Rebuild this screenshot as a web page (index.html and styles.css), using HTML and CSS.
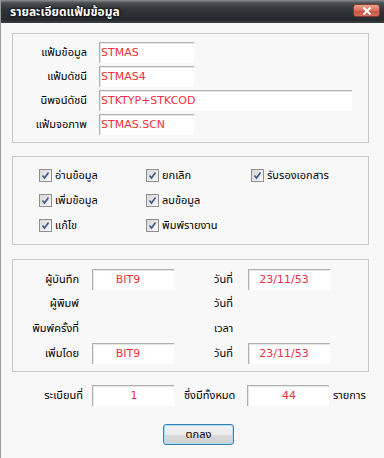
FILE: index.html
```html
<!DOCTYPE html>
<html>
<head>
	<meta charset="utf-8">
	<title>รายละเอียดแฟ้มข้อมูล</title>
	<link rel="stylesheet" href="styles.css">
</head>
<body>
	<div class="window">
		<div class="titlebar">
			<span class="title">รายละเอียดแฟ้มข้อมูล</span>
			<span class="close">
				<svg width="10" height="8" viewBox="0 0 10 8"><path d="M1.5 0.5 L8.5 7.5 M8.5 0.5 L1.5 7.5" stroke="#fff" stroke-width="2"/></svg>
			</span>
		</div>

		<div class="content">
			<div class="group files">
				<span class="label">แฟ้มข้อมูล</span><div class="field short">STMAS</div>
				<span class="label">แฟ้มดัชนี</span><div class="field short">STMAS4</div>
				<span class="label">นิพจน์ดัชนี</span><div class="field long">STKTYP+STKCOD</div>
				<span class="label">แฟ้มจอภาพ</span><div class="field short">STMAS.SCN</div>
			</div>

			<div class="group perms">
				<div class="check"><span class="box"></span>อ่านข้อมูล</div>
				<div class="check"><span class="box"></span>ยกเลิก</div>
				<div class="check"><span class="box"></span>รับรองเอกสาร</div>
				<div class="check"><span class="box"></span>เพิ่มข้อมูล</div>
				<div class="check"><span class="box"></span>ลบข้อมูล</div>
				<div></div>
				<div class="check"><span class="box"></span>แก้ไข</div>
				<div class="check"><span class="box"></span>พิมพ์รายงาน</div>
			</div>

			<div class="group audit">
				<span class="label">ผู้บันทึก</span><div class="field center">BIT9</div>
				<span class="label2">วันที่</span><div class="field center">23/11/53</div>

				<span class="label">ผู้พิมพ์</span><div></div>
				<span class="label2">วันที่</span><div></div>

				<span class="label">พิมพ์ครั้งที่</span><div></div>
				<span class="label2">เวลา</span><div></div>

				<span class="label">เพิ่มโดย</span><div class="field center">BIT9</div>
				<span class="label2">วันที่</span><div class="field center">23/11/53</div>
			</div>

			<div class="totals">
				<span class="label first">ระเบียนที่</span>
				<div class="field center">1</div>
				<span class="label middle">ซึ่งมีทั้งหมด</span>
				<div class="field center">44</div>
				<span class="label last">รายการ</span>
			</div>

			<div class="actions">
				<button class="ok">ตกลง</button>
			</div>
		</div>
	</div>
</body>
</html>
```

FILE: styles.css
```css
body{
	margin: 0;
	font-family: Tahoma, "Noto Sans Thai", "DejaVu Sans", sans-serif;
	font-size: 11px;
	color: #000;
	background: #f8f8f8;
}
.window{
	width: 384px;
	height: 458px;
	box-sizing: border-box;
	background: #f8f8f8;
	border-left: 1px solid #9a9a9a;
	overflow: hidden;
}
.titlebar{
	height: 23px;
	display: flex;
	align-items: center;
	justify-content: space-between;
	padding: 0 4px 0 9px;
	background: linear-gradient(#8a8e93 0, #4a4e53 3px, #32363b 9px, #25292d 20px, #3e4247 23px);
}
.title{
	color: white;
	font-weight: bold;
	font-size: 12px;
	text-shadow: 0 0 3px #000, 0 0 2px #000;
}
.close{
	width: 27px;
	height: 13px;
	box-sizing: border-box;
	display: flex;
	align-items: center;
	justify-content: center;
	border: 1px solid #8a3a2c;
	border-radius: 3px;
	background: linear-gradient(#eaa590, #d86f5c 50%, #c4503c 51%, #d2705c);
	margin-top: -2px;
}

.content{
	padding-left: 11px;
	padding-top: 10px;
}
.group{
	width: 357px;
	box-sizing: border-box;
	border: 1px solid #c8c8c8;
}
.label{
	text-align: right;
	white-space: nowrap;
}
.label2{
	white-space: nowrap;
	padding-left: 40px;
}

.field{
	height: 21px;
	box-sizing: border-box;
	background: white;
	border-top: 1px solid #b0b0b0;
	border-left: 1px solid #b0b0b0;
	box-shadow: inset 1px 1px #e6e6e6;
	color: #f03040;
	line-height: 19px;
	padding-left: 1px;
	font-family: Tahoma, "DejaVu Sans", sans-serif;
}
.field.center{
	text-align: center;
}

.files{
	display: grid;
	grid-template-columns: 74px 253px;
	grid-auto-rows: 21px;
	column-gap: 12px;
	row-gap: 3px;
	align-items: center;
	padding: 8px 0 7px 0;
}
.files .short{
	width: 95px;
}

.perms{
	margin-top: 13px;
	display: grid;
	grid-template-columns: 107px 105px 1fr;
	grid-auto-rows: 25px;
	align-items: center;
	padding: 6px 0 6px 26px;
}
.check{
	display: flex;
	align-items: center;
	gap: 3px;
	white-space: nowrap;
}
.box{
	width: 13px;
	height: 13px;
	box-sizing: border-box;
	border: 1px solid #8f8f8f;
	background-image: url("data:image/svg+xml;utf8,<svg xmlns='http://www.w3.org/2000/svg' width='11' height='11'><path d='M2.5 5.5 L4.5 8 L8.5 2.5' fill='none' stroke='%23465a8c' stroke-width='1.7'/></svg>"), linear-gradient(135deg, #d6d6d6, #fbfbfb);
}

.audit{
	margin-top: 14px;
	display: grid;
	grid-template-columns: 79px 82px 74px 82px;
	grid-template-rows: 21px 21px 23px 21px;
	row-gap: 3px;
	align-items: center;
	padding: 9px 0 7px 0;
}
.audit .label{
	padding-right: 13px;
}
.audit .field{
	padding-right: 12px;
}

.totals{
	margin-top: 13px;
	display: flex;
	align-items: center;
	height: 21px;
}
.totals .field{
	width: 82px;
}
.totals .first{
	width: 71px;
	margin-right: 9px;
}
.totals .middle{
	margin-left: 10px;
	width: 53px;
	margin-right: 10px;
	text-align: left;
}
.totals .last{
	margin-left: 4px;
}

.actions{
	margin-top: 18px;
	padding-left: 151px;
}
.ok{
	width: 71px;
	height: 21px;
	font-family: Tahoma, "Noto Sans Thai", "DejaVu Sans", sans-serif;
	font-size: 11px;
	border: 1px solid #3c7fb1;
	border-radius: 3px;
	background: linear-gradient(#f2f2f2, #ebebeb 50%, #dbdbdb 51%, #cfcfcf);
	box-shadow: inset 0 0 0 1px #a9dff8;
	padding: 0;
}
```
